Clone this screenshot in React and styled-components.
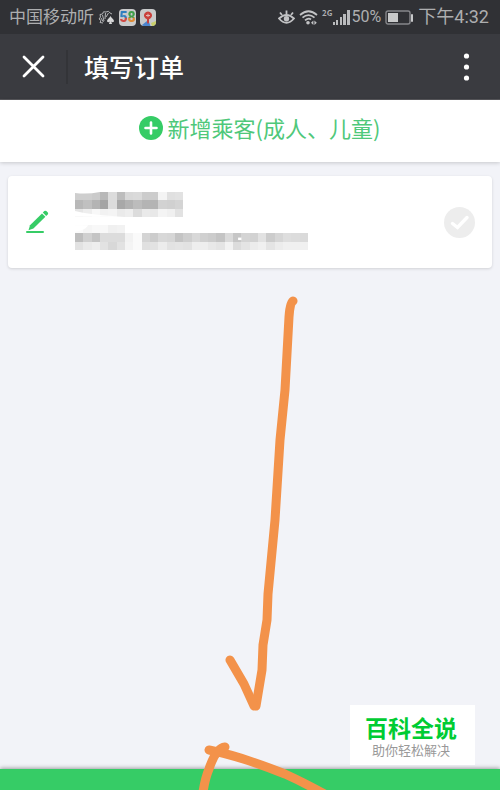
import styled, { createGlobalStyle } from "styled-components";

const GlobalStyle = createGlobalStyle`
    * {
        box-sizing: border-box;
    }
    body {
        margin: 0;
        background-color: #f2f3f8;
        font-family: Roboto, "Noto Sans CJK SC", sans-serif;
    }
    button {
        padding: 0;
        border: none;
        background: none;
        font-family: inherit;
        cursor: pointer;
    }
    svg {
        display: block;
        flex-shrink: 0;
    }
`;

const Page = styled.div`
    position: relative;
    display: flex;
    flex-direction: column;
    min-height: 100vh;
    overflow: hidden;
`;

const StatusBar = styled.div`
    display: flex;
    justify-content: space-between;
    align-items: center;
    height: 34px;
    padding: 0 11px 0 9px;
    background-color: #303135;
    color: #adaeb0;
    white-space: nowrap;
`;
const StatusGroup = styled.div`
    display: flex;
    align-items: center;
    gap: ${({$gap}) => $gap}px;
`;
const StatusText = styled.span`
    font-size: ${({$size}) => $size}px;
    line-height: 24px;
`;

const NavBar = styled.header`
    display: flex;
    align-items: center;
    height: 66px;
    padding: 0 22px;
    border-bottom: 1px solid #57575b;
    background-color: #3a3b40;
    color: #fff;
`;
const NavButton = styled.button`
    display: flex;
    color: #fff;
`;
const Divider = styled.div`
    width: 2px;
    height: 34px;
    margin: 0 16px 0 21px;
    background-color: #333438;
`;
const Title = styled.h1`
    flex: 1;
    margin: 0;
    padding-top: 4px;
    font-size: 25px;
    font-weight: 500;
    line-height: 36px;
`;

const AddButton = styled.button`
    display: flex;
    justify-content: center;
    align-items: center;
    gap: 5px;
    width: 100%;
    height: 62px;
    && {
        padding: 0 0 6px 19px;
        background-color: #fff;
        font-family: "Noto Sans CJK SC", sans-serif;
    }
    box-shadow: 0 1px 4px rgba(0, 0, 0, 0.18);
    color: #4fc87a;
    font-size: 22px;
    line-height: 32px;
`;
const AddText = styled.span`
    padding-bottom: 3px;
`;

const List = styled.main`
    flex: 1;
    padding: 14px 8px;
`;
const Card = styled.section`
    display: flex;
    align-items: center;
    height: 92px;
    padding: 0 17px;
    border-radius: 4px;
    background-color: #fff;
    box-shadow: 0 1px 3px rgba(0, 0, 0, 0.14);
`;
const EditButton = styled.button`
    display: flex;
    margin-right: 26px;
`;
const Details = styled.div`
    flex: 1;
    padding-bottom: 3px;
`;
const Check = styled.input`
    appearance: none;
    width: 31px;
    height: 31px;
    margin: 0;
    border-radius: 50%;
    background-color: #ededed;
    cursor: pointer;

    &:checked {
        background-color: #36cc66;
    }
`;
const CheckLabel = styled.label`
    display: grid;

    > * {
        grid-area: 1 / 1;
    }
    svg {
        pointer-events: none;
    }
`;

const Submit = styled.button`
    width: 100%;
    height: 21px;
    && {
        background-color: #36cc66;
    }
    box-shadow: 0 -1px 4px rgba(0, 0, 0, 0.35);
`;

const Badge = styled.aside`
    position: absolute;
    right: 25px;
    bottom: 25px;
    width: 125px;
    padding: 12px 3px 6px 0;
    background-color: #fff;
    text-align: center;
`;
const BadgeName = styled.div`
    color: #00cc33;
    font-size: 23px;
    font-weight: 700;
    line-height: 26px;
`;
const BadgeNote = styled.div`
    color: #999;
    font-size: 13px;
    line-height: 16px;
`;

const Strokes = styled.svg`
    position: absolute;
    top: 0;
    left: 0;
    width: 100%;
    pointer-events: none;
`;

// grey level of every tile, one hex pair each
const mosaic = [
    "cececab8dcbdd8daccccf4e0e2",
    "b8c0b4a4dca8b2bcb4b4d2d0d4",
    "e6eef8f2f4eaeedceae8f4f0e2",
    "",
    "fbf5f8f8f0f2",
    "bed0c4dcdcdcf2fad4ccd8d6c4ced8d0ccc4dac6d4d2e2ccd6dedcda",
    "e2eaeee2d8e2f4fae0e2ece2e4e2eeeee8e4f2dce4ecf0e4ecf0f0f0",
];

function Mosaic() {
    return (
        <svg width="233" height="58" viewBox="0 0 28 7" preserveAspectRatio="none" shapeRendering="crispEdges" aria-hidden="true">
            {mosaic.map((row, y) =>
                (row.match(/../g) || []).map((tone, x) => (
                    <rect key={`${x}-${y}`} x={x} y={y} width="1" height="1" fill={`#${tone}${tone}${tone}`} />
                ))
            )}
            <g fill="#fff" shapeRendering="auto">
                <path d="M0 2.3 Q2 2.8 6 3 H0Z" />
                <path d="M0 4 H1.6 Q1.2 4.6 0 4.8Z" />
                <path d="M0 0 H3 Q1.5 .3 0 .12Z" />
                <rect x="19.6" y="5.5" width=".4" height=".3" />
            </g>
        </svg>
    );
}

function ShellIcon() {
    return (
        <svg width="17" height="15" viewBox="0 0 17 15" fill="none" stroke="#b2b3b5">
            <path d="M5 13 L2 12.5 L3 10.5 L1 9 L2.5 7 L2 4.5 L4.5 4 L5.5 1.8 L8 2 L10.5 1.3 L12 3 L14 4" />
            <path d="M5.5 12 L3 8 M6 11 L4.5 5 M7 9 L7.5 3 M8 7 L10.5 3" />
            <path d="M12.5 6 C13 8 16 9 16 11 C16 12.3 14.2 12.5 13.3 11.6 L14 14 H11 L11.7 11.6 C10.8 12.5 9 12.3 9 11 C9 9 12 8 12.5 6Z" fill="#d8d8d9" stroke="none" />
        </svg>
    );
}

const AppTile = styled.span`
    width: 17px;
    height: 17px;
    border-radius: 4px;
    background-color: #c9cacb;
    font-size: 14px;
    font-weight: 900;
    line-height: 17px;
    text-align: center;
`;
const Digit = styled.span`
    background: linear-gradient(${({$from, $to}) => `${$from} 52%, ${$to} 56%`});
    background-clip: text;
    color: transparent;
`;

function PinIcon() {
    return (
        <svg width="16" height="17" viewBox="0 0 16 17">
            <rect width="16" height="17" rx="4" fill="#c9cacb" />
            <path d="M2 16 L7 12 L9 13 L10.5 17 H4 Q2.5 17 2 16Z" fill="#4c86cf" />
            <path d="M11 14 L16 12 V14 Q15.5 16.5 13 17 H12Z" fill="#c9cf6a" />
            <path d="M7 13.5 L7 10.3 A4 4 0 1 1 9 10.3 L9 13.5 L8 15Z" fill="#c9403c" />
            <path d="M6 6.5 H10 M8 4.8 V8" stroke="#e2b5b3" />
        </svg>
    );
}

function EyeIcon() {
    return (
        <svg width="17" height="17" viewBox="0 0 17 17" fill="none" stroke="#c2c3c5" strokeWidth="1.8">
            <path d="M1 9.5 Q8.5 2.5 16 9.5 Q8.5 18 1 9.5Z" />
            <circle cx="8.5" cy="9.8" r="2.7" fill="#c2c3c5" stroke="none" />
            <path d="M2 3.5 L4 6 M8.5 1.5 V5 M15 3.5 L13 6" />
        </svg>
    );
}

function WifiIcon() {
    return (
        <svg width="19" height="17" viewBox="0 0 19 17" fill="none" stroke="#c2c3c5" strokeWidth="1.7">
            <path d="M1 6 Q9.5 -1.5 18 6 M3.5 8.7 Q9.5 3.4 15.5 8.7 M6 11.4 Q9.5 8.3 12 10.5" />
            <circle cx="9" cy="13.8" r="1.8" fill="#c2c3c5" stroke="none" />
            <path d="M14.4 11.5 L12 13.7 L14.4 15.9Z M15.4 11.5 L17.8 13.7 L15.4 15.9Z" fill="#c2c3c5" stroke="none" />
        </svg>
    );
}

const Network = styled.span`
    align-self: flex-start;
    font-family: "Noto Sans CJK SC", sans-serif;
    font-size: 8px;
    font-weight: 700;
    line-height: 8px;
`;

function SignalIcon() {
    return (
        <svg width="17" height="16" viewBox="0 0 17 16" fill="#b9babc">
            <rect x="0" y="13" width="2" height="3" />
            <rect x="3" y="11" width="2" height="5" />
            <rect x="7" y="8" width="2" height="8" />
            <rect x="10" y="5" width="3" height="11" />
            <rect x="14" y="1" width="3" height="15" />
        </svg>
    );
}

function BatteryIcon() {
    return (
        <svg width="29" height="15" viewBox="0 0 29 15">
            <rect x="1" y="1" width="24" height="13" rx="2" fill="none" stroke="#85868a" strokeWidth="1.4" />
            <rect x="3" y="3" width="10" height="9" fill="#c8c9ca" />
            <rect x="26" y="4" width="2" height="8" rx="1" fill="#c8c9ca" />
        </svg>
    );
}

function App() {
    return (
        <>
            <GlobalStyle />
            <Page>
                <StatusBar>
                    <StatusGroup $gap={4}>
                        <StatusText $size={17}>中国移动听</StatusText>
                        <ShellIcon />
                        <AppTile>
                            <Digit $from="#2f7fc0" $to="#cf4a45">5</Digit>
                            <Digit $from="#3f9f4a" $to="#dd8a35">8</Digit>
                        </AppTile>
                        <PinIcon />
                    </StatusGroup>
                    <StatusGroup $gap={4}>
                        <EyeIcon />
                        <WifiIcon />
                        <StatusGroup $gap={2}>
                            <StatusGroup $gap={0}>
                                <Network>2G</Network>
                                <SignalIcon />
                            </StatusGroup>
                            <StatusText $size={16}>50%</StatusText>
                        </StatusGroup>
                        <BatteryIcon />
                        <StatusText $size={18}>下午4:32</StatusText>
                    </StatusGroup>
                </StatusBar>
                <NavBar>
                    <NavButton aria-label="关闭">
                        <svg width="23" height="23" viewBox="0 0 23 23" stroke="currentColor" strokeWidth="2.8" strokeLinecap="round">
                            <path d="M2 2 L21 21 M21 2 L2 21" />
                        </svg>
                    </NavButton>
                    <Divider />
                    <Title>填写订单</Title>
                    <NavButton aria-label="更多">
                        <svg width="23" height="28" viewBox="0 0 23 28" fill="currentColor">
                            <circle cx="11.5" cy="3" r="2.6" />
                            <circle cx="11.5" cy="14" r="2.6" />
                            <circle cx="11.5" cy="25" r="2.6" />
                        </svg>
                    </NavButton>
                </NavBar>
                <AddButton>
                    <svg width="24" height="24" viewBox="0 0 24 24">
                        <circle cx="12" cy="12" r="12" fill="#36cc66" />
                        <path d="M12 6.5 V17.5 M6.5 12 H17.5" stroke="#fff" strokeWidth="2.6" strokeLinecap="round" />
                    </svg>
                    <AddText>新增乘客(成人、儿童)</AddText>
                </AddButton>
                <List>
                    <Card>
                        <EditButton aria-label="编辑">
                            <svg width="24" height="24" viewBox="0 0 24 24" fill="#36cc66">
                                <path d="M3.5 20.2 L5 15.2 L17 3.4 L20.4 6.8 L8.4 18.6Z" />
                                <path d="M17.8 2.6 L19.3 1.1 Q20.3 .3 21.3 1.1 L22.8 2.6 Q23.6 3.5 22.7 4.5 L21.2 6Z" />
                                <rect x="1" y="21" width="18" height="2" rx="1" />
                            </svg>
                        </EditButton>
                        <Details>
                            <Mosaic />
                        </Details>
                        <CheckLabel>
                            <Check type="checkbox" aria-label="选择乘客" />
                            <svg width="31" height="31" viewBox="0 0 31 31" fill="none" stroke="#fff" strokeWidth="3.4" strokeLinecap="round">
                                <path d="M8.5 16.5 L13.5 20.5 L23 10.5" />
                            </svg>
                        </CheckLabel>
                    </Card>
                </List>
                <Submit aria-label="确定" />
                <Badge>
                    <BadgeName>百科全说</BadgeName>
                    <BadgeNote>助你轻松解决</BadgeNote>
                </Badge>
                <Strokes viewBox="0 0 500 790" fill="none" stroke="#f3924a" strokeWidth="9" strokeLinecap="round" strokeLinejoin="round" aria-hidden="true">
                    <path d="M293 301 Q290 302 289 317 L285 390 L280 440 L275 520 L268 594 L267 620 L263 645 L262 670 L256 706" />
                    <path d="M230 660 L244 684 L254 706" />
                    <path d="M209 750 Q240 756 285 774 Q305 783 330 797" />
                    <path d="M225 747 Q216 748 209 769 Q204 781 202 800" />
                </Strokes>
            </Page>
        </>
    );
}

export default App;
